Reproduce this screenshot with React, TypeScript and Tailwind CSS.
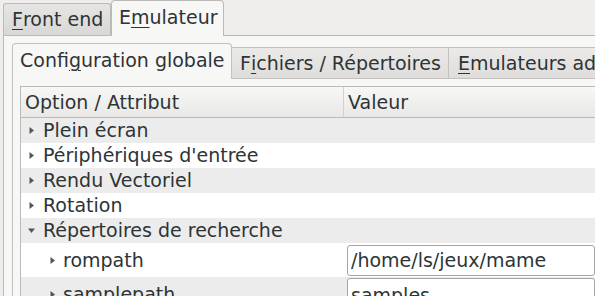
import React from "react";

const U = ({ children }: { children: React.ReactNode }) => (
	<span className="underline decoration-1 underline-offset-[3px]">{children}</span>
);

const Arrow = ({ open = false }: { open?: boolean }) => (
	<svg width="9" height="9" viewBox="0 0 9 9" className="shrink-0">
		{open ? (
			<polygon points="1,2.5 8,2.5 4.5,7" fill="#555753" />
		) : (
			<polygon points="2.5,1 7,4.5 2.5,8" fill="#555753" />
		)}
	</svg>
);

const rows = [
	{ label: "Plein écran", alt: true },
	{ label: "Périphériques d'entrée", alt: false },
	{ label: "Rendu Vectoriel", alt: true },
	{ label: "Rotation", alt: false },
	{ label: "Répertoires de recherche", alt: true, open: true },
];

export default function App() {
	return (
		<div
			className="w-[595px] h-[296px] overflow-hidden bg-[#efeeed] text-[19px] leading-none text-[#2e3436]"
			style={{ fontFamily: '"DejaVu Sans", sans-serif' }}
		>
			{/* top tabs */}
			<div className="flex items-end h-[35px] pl-[3px]">
				<div className="h-[32px] w-[108px] flex items-center pl-[8px] border border-b-0 border-[#bcbab7] rounded-t-[3px] bg-gradient-to-b from-[#e6e5e4] to-[#d9d8d6]">
					<U>F</U>ront end
				</div>
				<div className="relative z-10 mb-[-1px] h-[36px] w-[113px] flex items-center pl-[7px] pb-[2px] border border-b-0 border-[#bcbab7] rounded-t-[4px] bg-[#f7f7f6]">
					E<U>m</U>ulateur
				</div>
			</div>

			{/* outer pane */}
			<div className="ml-[3px] border-t border-l border-[#bcbab7] bg-[#f7f7f6] pl-[8px] pt-[7px] h-[261px]">
				<div className="flex items-end h-[35px]">
					<div className="relative z-10 mb-[-1px] h-[36px] w-[220px] flex items-center pl-[7px] pb-[2px] border border-b-0 border-[#c4c2bf] rounded-t-[4px] bg-[#f7f7f6]">
						Confi<U>g</U>uration globale
					</div>
					<div className="h-[31px] w-[217px] flex items-center pl-[8px] whitespace-nowrap border border-b-0 border-l-0 border-[#c4c2bf] bg-gradient-to-b from-[#ebeae9] to-[#dedddb]">
						F<U>i</U>chiers / Répertoires
					</div>
					<div className="h-[31px] flex-1 flex items-center pl-[9px] whitespace-nowrap overflow-hidden border border-b-0 border-l-0 border-r-0 border-[#c4c2bf] bg-gradient-to-b from-[#ebeae9] to-[#dedddb]">
						<U>E</U>mulateurs ad
					</div>
				</div>

				{/* inner pane */}
				<div className="border-t border-l border-[#c4c2bf] pl-[7px] pt-[7px] h-[220px]">
					<div className="border-t border-l border-[#bcbab7] bg-white h-[212px] overflow-hidden">
						<div className="flex h-[31px] border-b border-[#bcbab7] bg-gradient-to-b from-[#f7f7f6] to-[#e9e8e6]">
							<div className="w-[323px] flex items-center pl-[4px] border-r border-[#d3d1ce]">
								Option / Attribut
							</div>
							<div className="flex-1 flex items-center pl-[4px]">Valeur</div>
						</div>
						{rows.map((r) => (
							<div
								key={r.label}
								className={`flex items-center h-[25px] pl-[6px] gap-[7px] ${r.alt ? "bg-[#ececec]" : "bg-white"}`}
							>
								<Arrow open={r.open} />
								<span>{r.label}</span>
							</div>
						))}
						<div className="flex items-center h-[34px] bg-white">
							<div className="w-[324px] flex items-center pl-[27px] gap-[6px]">
								<Arrow />
								<span>rompath</span>
							</div>
							<div className="flex-1 h-[31px] ml-[2px] flex items-center pl-[3px] border border-[#a8a6a2] rounded-[3px] bg-white">
								/home/ls/jeux/mame
							</div>
						</div>
						<div className="flex items-start h-[34px] bg-[#ececec]">
							<div className="w-[324px] flex items-center h-[31px] pl-[27px] gap-[6px] pt-[4px]">
								<Arrow />
								<span>samplepath</span>
							</div>
							<div className="flex-1 h-[31px] ml-[2px] mt-[1px] flex items-center pl-[3px] pt-[4px] border border-[#a8a6a2] rounded-[3px] bg-white">
								samples
							</div>
						</div>
					</div>
				</div>
			</div>
		</div>
	);
}
